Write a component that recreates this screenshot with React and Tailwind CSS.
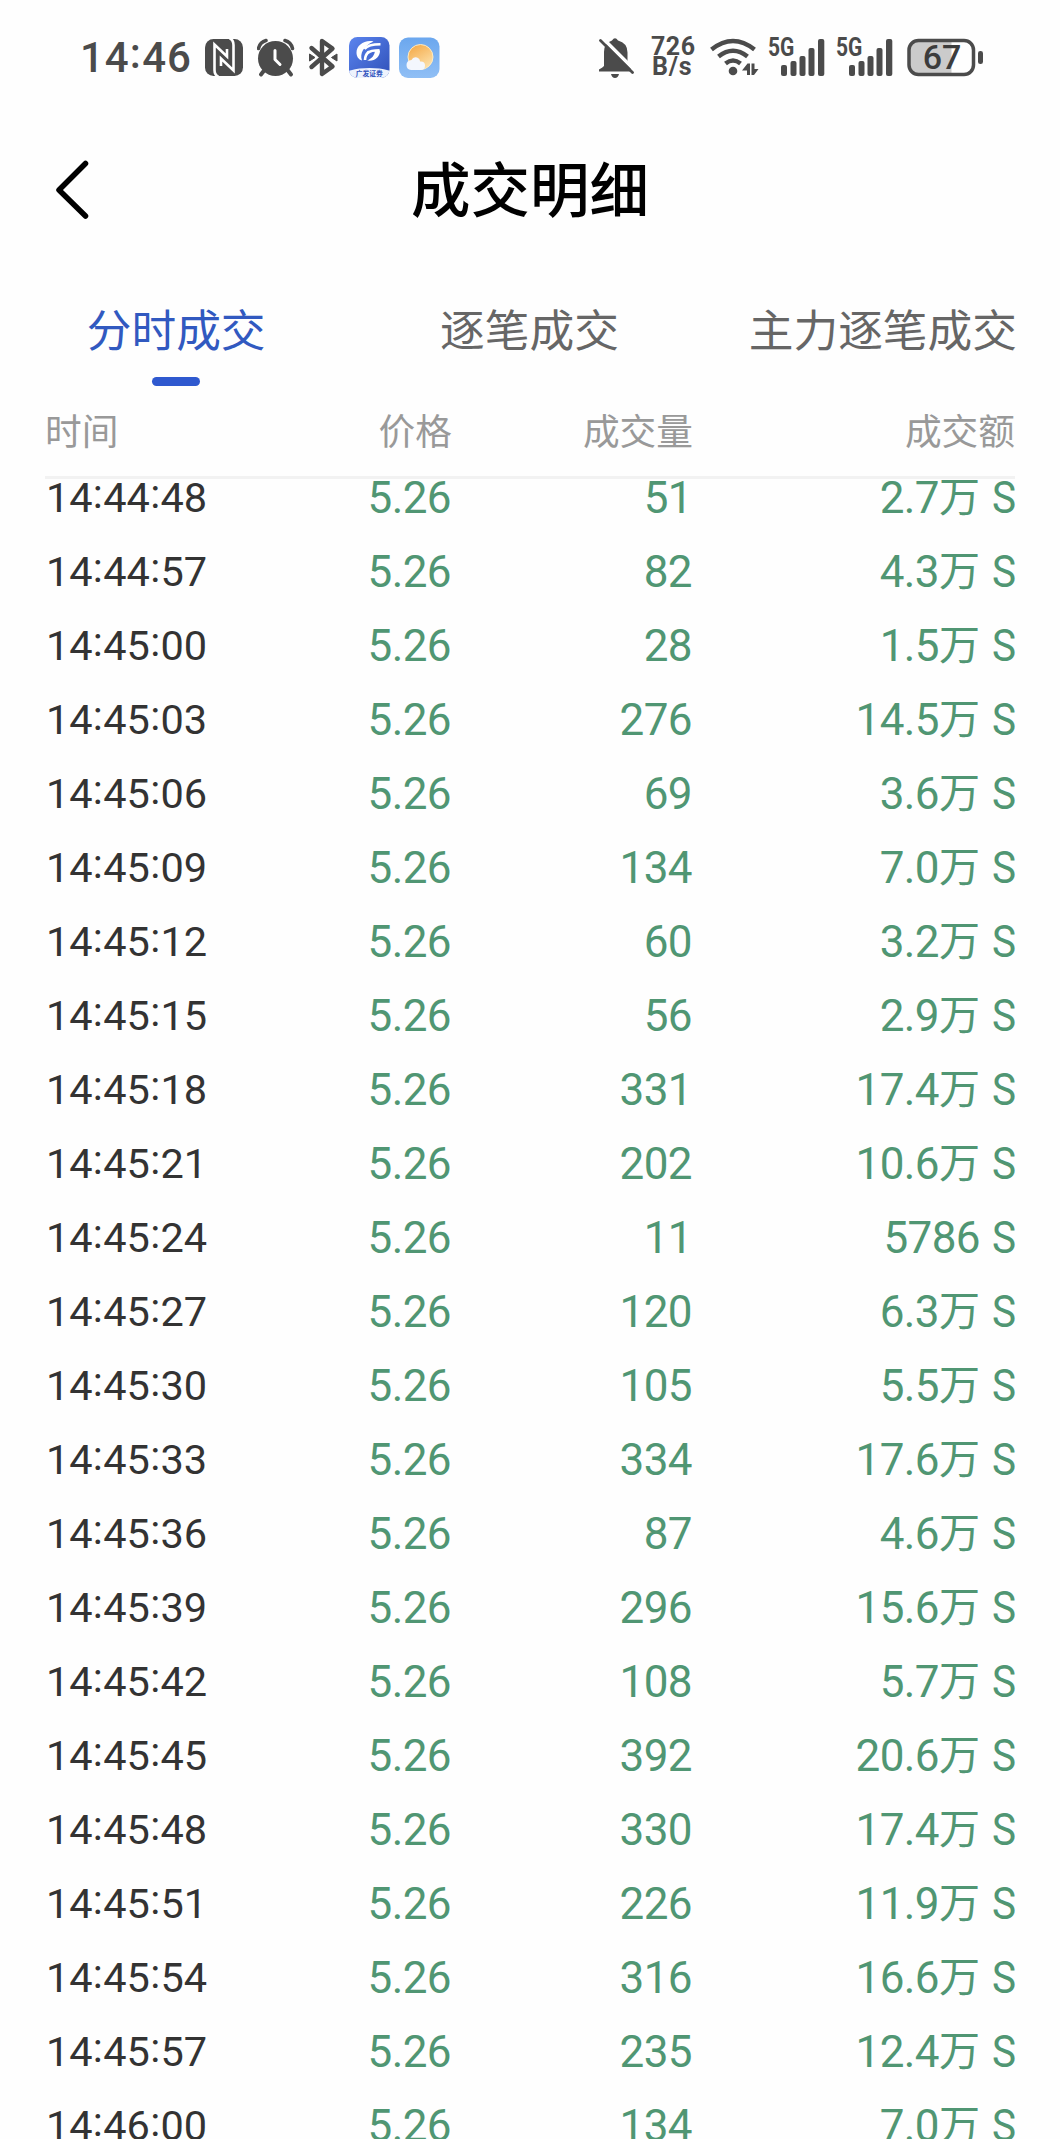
import { Fragment } from "react";

const rows = [
  ["14:44:48", "51", "2.7", "万"],
  ["14:44:57", "82", "4.3", "万"],
  ["14:45:00", "28", "1.5", "万"],
  ["14:45:03", "276", "14.5", "万"],
  ["14:45:06", "69", "3.6", "万"],
  ["14:45:09", "134", "7.0", "万"],
  ["14:45:12", "60", "3.2", "万"],
  ["14:45:15", "56", "2.9", "万"],
  ["14:45:18", "331", "17.4", "万"],
  ["14:45:21", "202", "10.6", "万"],
  ["14:45:24", "11", "5786", ""],
  ["14:45:27", "120", "6.3", "万"],
  ["14:45:30", "105", "5.5", "万"],
  ["14:45:33", "334", "17.6", "万"],
  ["14:45:36", "87", "4.6", "万"],
  ["14:45:39", "296", "15.6", "万"],
  ["14:45:42", "108", "5.7", "万"],
  ["14:45:45", "392", "20.6", "万"],
  ["14:45:48", "330", "17.4", "万"],
  ["14:45:51", "226", "11.9", "万"],
  ["14:45:54", "316", "16.6", "万"],
  ["14:45:57", "235", "12.4", "万"],
  ["14:46:00", "134", "7.0", "万"],
];

const tabs = ["分时成交", "逐笔成交", "主力逐笔成交"];

// Clock text whose colons sit centred on the digit height.
function Clock({ value }) {
  return value.split(":").map((part, i) => (
    <Fragment key={i}>
      {i > 0 && <span className="relative top-[-4px] px-[0.5px]">:</span>}
      {part}
    </Fragment>
  ));
}

function NfcIcon() {
  return (
    <svg width="38" height="44" viewBox="205 36 38 44" className="ml-[14px] shrink-0">
      <rect x="205" y="39" width="38" height="37" rx="8.500" fill="#4b4b4b" />
      <path d="M229.500 38q4 2 4 7V70.500L221 58.500V66" fill="none" stroke="#fff" strokeWidth="2.600" />
      <path d="M218.500 77q-4-2-4-7V44.500L227 56.500V49" fill="none" stroke="#fff" strokeWidth="2.600" />
    </svg>
  );
}

function AlarmIcon() {
  return (
    <svg width="38" height="44" viewBox="257 36 38 44" className="ml-[14px] shrink-0" fill="none">
      <circle cx="275.500" cy="58.500" r="17.500" fill="#4b4b4b" />
      <path d="M258.500 48.500q1.500-6.500 7.500-8M292.500 48.500q-1.500-6.500-7.500-8" stroke="#4b4b4b" strokeWidth="3.500" strokeLinecap="round" />
      <path d="M264.500 70l-3.500 4.500M287.500 70l3.500 4.500" stroke="#4b4b4b" strokeWidth="4" strokeLinecap="round" />
      <path d="M275 50.500V59.500l5 5" stroke="#fff" strokeWidth="3" strokeLinecap="round" strokeLinejoin="round" />
    </svg>
  );
}

function BluetoothIcon() {
  return (
    <svg width="30" height="44" viewBox="308 36 30 44" className="ml-[13px] shrink-0" fill="none">
      <path
        d="M311.500 48l21 18.500-10.500 7.500V41l10.500 7.500-21 18.500"
        stroke="#4b4b4b"
        strokeWidth="4.400"
        strokeLinejoin="round"
        strokeLinecap="round"
      />
      <path d="M309.500 54l5.500 3.500-5.500 3.500ZM337 54l-5.500 3.500 5.500 3.500Z" fill="#4b4b4b" stroke="#4b4b4b" strokeLinejoin="round" />
    </svg>
  );
}

function BrokerAppIcon() {
  return (
    <svg width="41" height="44" viewBox="349 36 41 44" className="ml-[11px] shrink-0" fill="none">
      <defs>
        <linearGradient id="broker" x1="0" y1="0" x2="1" y2="1">
          <stop offset="0" stopColor="#5b84ee" />
          <stop offset="1" stopColor="#2f50b8" />
        </linearGradient>
        <clipPath id="brokerClip">
          <rect x="349" y="37" width="40.500" height="41" rx="8.500" />
        </clipPath>
      </defs>
      <g clipPath="url(#brokerClip)">
        <rect x="349" y="37" width="41" height="41" fill="url(#broker)" />
        <ellipse cx="369.500" cy="76" rx="26" ry="8" fill="#eef3fd" />
      </g>
      <path d="M373.500 41.500c-9-2-17 4-17 11 0 4 2 7 5.500 8-2.500-7 1.500-14.500 11.500-19Z" fill="#fff" />
      <path d="M364.500 49q3.500-4.800 16-4.800M367.500 53q3-2.800 12-2.800" stroke="#fff" strokeWidth="2.600" />
      <path d="M380 50.500c0 6.500-5 11-13 10 5-2 7.500-5 8-10Z" fill="#fff" />
      <path d="M369 51.500q-4 3.500-4 8.500" stroke="#fff" strokeWidth="2.600" />
      <text x="369.300" y="76" textAnchor="middle" fontSize="6.800" fontWeight="700" fill="#3154bd" fontFamily="Noto Sans CJK SC, sans-serif">
        广发证券
      </text>
    </svg>
  );
}

function WeatherAppIcon() {
  return (
    <svg width="41" height="44" viewBox="399 36 41 44" className="ml-[9px] shrink-0">
      <defs>
        <linearGradient id="sky" x1="0" y1="0" x2="0" y2="1">
          <stop offset="0" stopColor="#6ba7ee" />
          <stop offset="1" stopColor="#90bff5" />
        </linearGradient>
        <linearGradient id="sun" x1="0" y1="0" x2="0.6" y2="1">
          <stop offset="0" stopColor="#f3a43f" />
          <stop offset="1" stopColor="#fde0a8" />
        </linearGradient>
      </defs>
      <rect x="399" y="37.500" width="40.500" height="40.500" rx="9" fill="url(#sky)" />
      <circle cx="420.500" cy="57" r="12.500" fill="url(#sun)" stroke="#fdebc4" />
      <path d="M411 70q-4.500-.5-4.500-5t5-5q1.500-3.500 5.500-2.500 3 1 3 4 5-.5 5 4t-4.500 4.500Z" fill="#f4f7fd" />
    </svg>
  );
}

function MutedBellIcon() {
  return (
    <svg width="36" height="44" viewBox="598 36 36 44" className="shrink-0" fill="none">
      <path
        fill="#4b4b4b"
        d="M604 66V52q0-9 8-11.500 3-4.500 6 0 9.500 2.500 9.500 12V63q1 3 3.500 5.500V71.500H599v-2q3.500-2 5-3.500ZM611 74h8q-1 4-4 4t-4-4Z"
      />
      <path d="M602.500 38l32 32" stroke="#fff" strokeWidth="3.500" />
      <path d="M600.500 40.500l32 32" stroke="#4b4b4b" strokeWidth="2.800" strokeLinecap="round" />
    </svg>
  );
}

function WifiIcon() {
  return (
    <svg width="50" height="44" viewBox="709 36 50 44" className="shrink-0" fill="none">
      <path d="M711.500 49.500q21.500-17 43 0" stroke="#4b4b4b" strokeWidth="4.500" />
      <path d="M718.500 56.500q14.500-11.500 29 0" stroke="#4b4b4b" strokeWidth="4.500" />
      <path d="M725.500 63.500q7.500-6 15 0" stroke="#4b4b4b" strokeWidth="4.500" />
      <circle cx="733" cy="71" r="4.300" fill="#4b4b4b" />
      <path fill="#4b4b4b" d="M742 70.500l5.500-7h2.500v11.500h-3V70.500ZM751.500 63.500h3V69h4l-4.500 6h-2.500Z" />
    </svg>
  );
}

function Signal() {
  return (
    <div className="relative h-11 w-[58px] shrink-0">
      <svg width="58" height="44" viewBox="767 36 58 44" fill="#4b4b4b">
        <rect x="781" y="65" width="6" height="11" rx="2" />
        <rect x="790.500" y="61" width="6" height="15" rx="2" />
        <rect x="799.500" y="56" width="6" height="20" rx="2" />
        <rect x="808.500" y="48" width="6" height="28" rx="2" />
        <rect x="818" y="39" width="6.300" height="37" rx="2" />
      </svg>
      <span className="absolute left-[1px] top-[-1px] origin-left scale-x-[.84] text-[25px] font-bold leading-[26px]">5G</span>
    </div>
  );
}

function Battery() {
  return (
    <div className="relative ml-[14px] h-11 w-[76px] shrink-0">
      <svg width="76" height="44" viewBox="907 36 76 44" fill="none">
        <path d="M918 41h33.500v33H918q-9 0-9-9V50q0-9 9-9Z" fill="#cbcbcb" />
        <rect x="909" y="40.500" width="64.500" height="34" rx="9.500" stroke="#4b4b4b" strokeWidth="3.500" />
        <rect x="978" y="51" width="5" height="13" rx="2.300" fill="#4b4b4b" />
      </svg>
      <span className="absolute left-0 top-[1px] w-[70px] text-center text-[34px] font-medium leading-[40px] text-[#3c3c3c]">67</span>
    </div>
  );
}

function StatusBar() {
  return (
    <div className="flex h-[112px] shrink-0 items-start pt-[36px] font-['Roboto',sans-serif] text-[#4b4b4b]">
      <span className="ml-[80px] w-[111px] whitespace-nowrap pt-[1px] text-[42px] font-medium leading-[42px] tracking-[0.8px]">
        <Clock value="14:46" />
      </span>
      <NfcIcon />
      <AlarmIcon />
      <BluetoothIcon />
      <BrokerAppIcon />
      <WeatherAppIcon />
      <div className="ml-auto mr-[77px] flex">
        <MutedBellIcon />
        <div className="ml-[17px] flex w-[58px] flex-col whitespace-nowrap pt-[1px] text-[25px] font-bold leading-[20px]">
          <span className="tracking-[0.5px]">726</span>
          <span className="ml-[1px] tracking-[0.8px]">B/s</span>
        </div>
        <WifiIcon />
        <div className="ml-[8px] flex gap-[10px]">
          <Signal />
          <Signal />
        </div>
        <Battery />
      </div>
    </div>
  );
}

export default function App() {
  return (
    <div className="flex h-[2139px] w-[1060px] flex-col overflow-hidden bg-[#fefefe] font-['Noto_Sans_CJK_SC',sans-serif]">
      <StatusBar />
      <header className="grid h-[156px] shrink-0 grid-cols-[1fr_auto_1fr] items-center">
        <svg width="34" height="60" viewBox="56 160 34 60" className="ml-[55px]" fill="none">
          <path d="M86.500 163.500L60 190l26.500 26" stroke="#000" strokeWidth="5.500" strokeLinecap="round" strokeLinejoin="round" />
        </svg>
        <h1 className="pb-[9px] text-[59.500px] font-medium leading-[88px] text-black">成交明细</h1>
      </header>
      <nav className="grid h-[123px] shrink-0 grid-cols-3 text-[44.700px] text-[#666]">
        {tabs.map((tab, i) => (
          <div key={tab} className="flex flex-col items-center pr-[1px] pt-[27px]">
            <span className={i === 0 ? "leading-[66px] text-[#3159c0]" : "leading-[66px]"}>{tab}</span>
            {i === 0 && <div className="mt-[16px] h-[9px] w-[48px] rounded-full bg-[#2f59cf]" />}
          </div>
        ))}
      </nav>
      <div className="mx-[45px] grid h-[88px] shrink-0 grid-cols-[200px_207px_241px_1fr] border-b-[3px] border-[#f2f2f2] pt-[11px] text-[36.700px] leading-[54px] text-[#999]">
        <span>时间</span>
        <span className="text-right">价格</span>
        <span className="text-right">成交量</span>
        <span className="text-right">成交额</span>
      </div>
      <main className="min-h-0 flex-1 overflow-hidden px-[45px] font-['Roboto','Noto_Sans_CJK_SC',sans-serif]">
        <div className="mt-[-18px]">
          {rows.map(([time, volume, amount, unit]) => (
            <div
              key={time}
              className="grid h-[74px] grid-cols-[200px_206px_241px_1fr] whitespace-nowrap text-right text-[44px] leading-[74px] tracking-[-0.6px] text-[#509673]"
            >
              <span className="pl-[1px] text-left text-[41.500px] tracking-[-0.150px] text-[#333]">
                <Clock value={time} />
              </span>
              <span>5.26</span>
              <span>{volume}</span>
              <span className="flex justify-end">
                <span>{amount}</span>
                <span className="text-[41px] tracking-normal">{unit}</span>
                <span className="ml-[10px] w-[25px] origin-right scale-x-[.92]">S</span>
              </span>
            </div>
          ))}
        </div>
      </main>
    </div>
  );
}
